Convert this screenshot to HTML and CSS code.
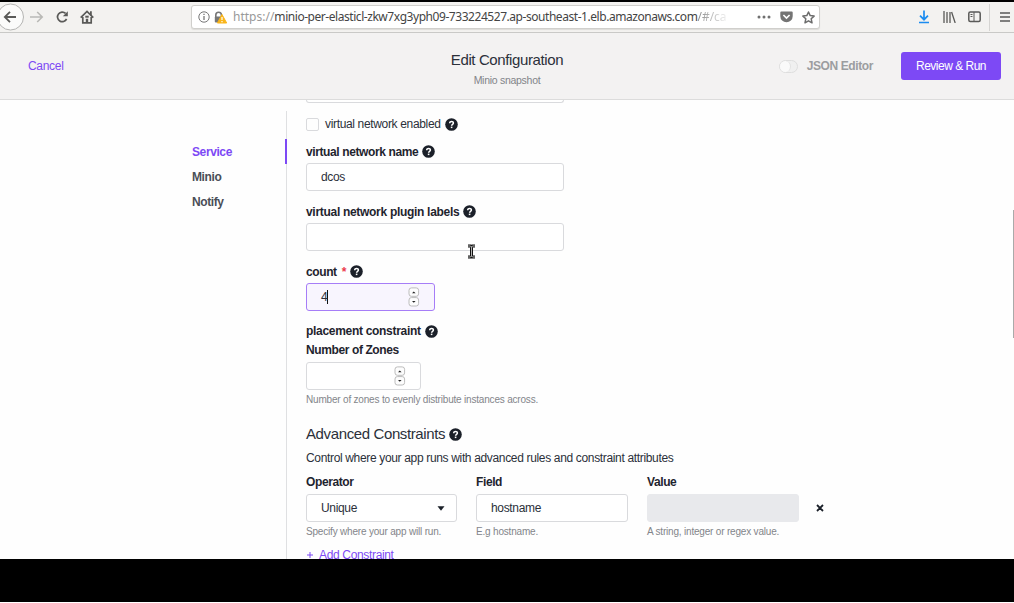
FILE: index.html
```html
<!DOCTYPE html>
<html lang="en">
<head>
<meta charset="utf-8">
<title>Edit Configuration</title>
<link rel="stylesheet" href="styles.css">
</head>
<body>
<svg class="defs" width="0" height="0">
  <symbol id="help" viewBox="0 0 13 13"><circle cx="6.5" cy="6.5" r="6.3" fill="#1b2029"/><path d="M4.7 5.2c0-2.4 3.8-2.2 3.7-.1 0 1.2-1.8 1.2-1.8 2.6" fill="none" stroke="#fff" stroke-width="1.5"/><rect x="5.8" y="8.6" width="1.6" height="1.5" fill="#fff"/></symbol>
  <symbol id="spin" viewBox="0 0 12 20"><rect x="1" y=".9" width="9.6" height="8.4" rx="2.4" fill="#fdfdfd" stroke="#bcbcbc"/><rect x="1" y="10.6" width="9.6" height="8.4" rx="2.4" fill="#fdfdfd" stroke="#bcbcbc"/><path d="M4 6.2 5.8 4.4 7.6 6.2zM4 14 5.8 15.8 7.6 14z" fill="#222"/></symbol>
</svg>
<div class="screen">
  <nav class="toolbar">
    <div class="nav-buttons">
      <span class="back"><svg width="26" height="28" viewBox="0 0 26 28"><circle cx="10.5" cy="14" r="13" fill="#fbfbfa" stroke="#b5b5b3"/><path d="M16 14H5.2M10 8.8 4.8 14l5.2 5.2" fill="none" stroke="#5a5a58" stroke-width="1.8"/></svg></span>
      <svg width="14" height="14" viewBox="0 0 14 14"><path d="M0 7h12M7.2 2l5 5-5 5" fill="none" stroke="#b9b9b6" stroke-width="1.6"/></svg>
      <svg class="reload" width="14" height="14" viewBox="0 0 14 14"><path d="M10.600 3.400A4.800 4.800 0 1 0 11.600 9" fill="none" stroke="#5a5a58" stroke-width="1.700"/><path d="M12.800 1.300v5H7.800z" fill="#5a5a58"/></svg>
      <svg class="home" width="14" height="14" viewBox="0 0 14 14"><path d="M.7 7.6 7 1.5l6.3 6.1M2.8 7v5.8h8.4V7" fill="none" stroke="#5a5a58" stroke-width="1.7"/><path d="M5.8 13V8.8h2.4V13M10 1.3h1.8v4H10z" fill="#5a5a58"/><rect x="5.3" y="5.7" width="3.4" height="2" fill="#5a5a58"/></svg>
    </div>
    <div class="urlbar">
      <svg width="12" height="12" viewBox="0 0 12 12"><circle cx="6" cy="6" r="5.2" fill="none" stroke="#777"/><path d="M6 5v4M6 2.7v1.4" stroke="#777" stroke-width="1.3"/></svg>
      <svg class="lock" width="13" height="13" viewBox="0 0 13 13"><path d="M1.8 6V4a2.8 2.8 0 0 1 5.6 0v2" fill="none" stroke="#777" stroke-width="1.6"/><rect x=".8" y="5.5" width="7.6" height="6" rx="1" fill="#777"/><path d="M8 3.5 12.7 12H3.4z" fill="#f9b51b" stroke="#f9b51b" stroke-linejoin="round"/><path d="M8 6v3M8 10v1.3" stroke="#fff" stroke-width="1.2"/></svg>
      <span class="url"><span class="scheme">https://</span><span class="host">minio-per-elasticl-zkw7xg3yph09-733224527.ap-southeast-1.elb.amazonaws.com</span><span class="path">/#/ca</span></span>
      <svg class="dots" width="14" height="12" viewBox="0 0 14 12"><g fill="#707070"><circle cx="2" cy="6" r="1.5"/><circle cx="7" cy="6" r="1.5"/><circle cx="12" cy="6" r="1.5"/></g></svg>
      <svg width="13" height="12" viewBox="0 0 13 12"><path d="M1.3.5h10.4q1 0 1 1v3.7a6.2 6 0 0 1-12.4 0V1.500q0-1 1-1z" fill="#747474"/><path d="m3.4 4 3.1 3 3.1-3" fill="none" stroke="#fff" stroke-width="1.7"/></svg>
      <svg width="13" height="13" viewBox="0 0 13 13"><path d="m6.500 1 1.700 3.600 3.900.5-2.900 2.700.8 4-3.500-2-3.500 2 .8-4L.9 5.100l3.900-.5z" fill="none" stroke="#6c6c6c" stroke-width="1.5" stroke-linejoin="round"/></svg>
    </div>
    <div class="tools">
      <svg width="12" height="14" viewBox="0 0 12 14"><path d="M6 .5v9M2 5.700l4 4 4-4M1 12.500h10" fill="none" stroke="#1b8cf0" stroke-width="1.700"/></svg>
      <svg width="13" height="12" viewBox="0 0 13 12"><path d="M1 0v12M4 1v11M7 1v11M8.600 1l3.600 11" fill="none" stroke="#5a5a58" stroke-width="1.300"/></svg>
      <svg class="panel" width="13" height="12" viewBox="0 0 13 12"><rect x=".8" y="1" width="11.400" height="9.600" rx="1.500" fill="none" stroke="#5a5a58" stroke-width="1.500"/><path d="M6 1v10M2.500 3.500h2M2.500 5.500h2" stroke="#5a5a58" fill="none"/></svg>
      <span class="divider"></span>
      <svg width="10" height="12" viewBox="0 0 10 12"><path d="M0 2h10M0 6h10M0 10h10" stroke="#5a5a58" stroke-width="1.500"/></svg>
    </div>
  </nav>
  <header class="header">
    <a class="cancel">Cancel</a>
    <div class="heading"><h1>Edit Configuration</h1><p>Minio snapshot</p></div>
    <div class="actions"><span class="toggle"><i></i></span><span class="json">JSON Editor</span><button class="run">Review &amp; Run</button></div>
  </header>
  <main class="content">
    <aside class="sidebar">
      <ul><li class="active">Service</li><li>Minio</li><li>Notify</li></ul>
    </aside>
    <section class="form">
      <div class="input clipped"></div>
      <div class="check"><span class="box"></span><span>virtual network enabled</span><svg class="help"><use href="#help"/></svg></div>
      <div class="label"><span>virtual network name</span><svg class="help"><use href="#help"/></svg></div>
      <div class="input">dcos</div>
      <div class="label next"><span class="wide">virtual network plugin labels</span><svg class="help"><use href="#help"/></svg></div>
      <div class="input"></div>
      <div class="label next"><span>count</span><b class="req">*</b><svg class="help"><use href="#help"/></svg></div>
      <div class="input number focused"><span class="typed">4</span><svg class="spin"><use href="#spin"/></svg></div>
      <div class="label placement"><span class="wide">placement constraint</span><svg class="help"><use href="#help"/></svg></div>
      <div class="label zones"><span>Number of Zones</span></div>
      <div class="input number zone-input"><svg class="spin"><use href="#spin"/></svg></div>
      <p class="hint">Number of zones to evenly distribute instances across.</p>
      <h2><span>Advanced Constraints</span><svg class="help"><use href="#help"/></svg></h2>
      <p class="desc">Control where your app runs with advanced rules and constraint attributes</p>
      <div class="row">
        <div><div class="label">Operator</div><div class="input select">Unique<svg width="8" height="5" viewBox="0 0 8 5"><path d="M.5.300h7L4 4.700z" fill="#1b2029"/></svg></div><p class="hint">Specify where your app will run.</p></div>
        <div><div class="label">Field</div><div class="input">hostname</div><p class="hint">E.g hostname.</p></div>
        <div><div class="label">Value</div><div class="input disabled"></div><p class="hint">A string, integer or regex value.</p></div>
        <svg class="remove" width="8" height="8" viewBox="0 0 8 8"><path d="m1 1 6 6M7 1 1 7" stroke="#1b2029" stroke-width="1.800"/></svg>
      </div>
      <a class="add"><svg width="8" height="8" viewBox="0 0 8 8"><path d="M4 1v6M1 4h6" stroke="#7d49f5"/></svg>Add Constraint</a>
    </section>
    <span class="scrollbar"></span>
    <svg class="pointer" width="9" height="15" viewBox="0 0 9 15"><path d="M1 2h2.500l1 1 1-1H8M4.500 3v9M1 13h2.500l1-1 1 1H8" fill="none" stroke="#111" stroke-width="3"/><path d="M1 2h2.500l1 1 1-1H8M4.500 3v9M1 13h2.500l1-1 1 1H8" fill="none" stroke="#ddd" stroke-width=".8"/></svg>
  </main>
</div>
</body>
</html>
```
FILE: styles.css
```css
* { box-sizing: border-box; }
body { margin: 0; background: #fefefe; overflow: hidden; font: 12px "Liberation Sans", Arial, sans-serif; color: #2b303a; letter-spacing: -.34px; }
h1, h2, p, ul { margin: 0; padding: 0; font-weight: normal; }
svg { flex: none; display: block; }
.defs { position: absolute; }
.screen { height: 602px; background: #000; padding-top: 2px; }
.toolbar { height: 31px; background: #f3f2f0; border-bottom: 1px solid #c9c9c7; display: flex; align-items: center; }
.nav-buttons { width: 191px; display: flex; align-items: center; }
.back { width: 30px; }
.reload { margin-left: 11px; }
.home { margin-left: 11px; }
.urlbar { width: 629px; height: 24px; border: 1px solid #d0cfcc; border-radius: 3px; background: #fff; display: flex; align-items: center; padding-left: 6px; box-shadow: 0 1px 1px #dddcd9; }
.lock { margin-left: 4px; }
.url { width: 496px; margin-left: 6px; white-space: nowrap; font: 12px/20px "Noto Sans", sans-serif; letter-spacing: -.45px; color: #444; display: flex; }
.scheme { color: #999; letter-spacing: 0; }
.path { letter-spacing: 0; color: transparent; background: linear-gradient(90deg, #888, #f2f2f2); -webkit-background-clip: text; background-clip: text; }
.dots { margin: 0 9px 0 28px; }
.dots + svg { margin-right: 9px; }
.tools { display: flex; align-items: center; margin-left: 98px; }
.tools svg + svg { margin-left: 13px; }
.tools .panel { margin-left: 12px; }
.divider { width: 1px; height: 27px; background: #d5d4d2; margin: 0 10px 0 8px; }
.header { height: 67px; background: #f3f2f2; border-bottom: 1px solid #dcdcdc; display: grid; grid-template-columns: 1fr 200px 1fr; align-items: center; padding: 0 13px 0 28px; }
.cancel { color: #7d49f5; letter-spacing: -.3px; }
.heading { text-align: center; padding: 7px 15px 0 0; }
h1 { font-size: 15px; line-height: 20px; letter-spacing: -.38px; }
.heading p { font-size: 10.5px; line-height: 20px; color: #828489; letter-spacing: -.28px; }
.actions { display: flex; align-items: center; justify-content: flex-end; }
.toggle { width: 19px; height: 13px; border: 1px solid #dedede; border-radius: 7px; background: #f0f0f0; }
.toggle i { display: block; width: 11px; height: 11px; border-radius: 6px; background: #fafafa; border-right: 1px solid #e2e2e2; }
.json { margin: 0 28px 0 9px; font-weight: bold; color: #9b9da0; letter-spacing: -.4px; }
.run { width: 100px; height: 28px; border: 0; border-radius: 3px; background: #7d49f5; color: #fff; font: inherit; letter-spacing: -.5px; padding: 0; }
.content { position: relative; height: 459px; background: #fefefe; overflow: hidden; display: flex; align-items: flex-start; }
.sidebar { width: 287px; height: 448px; margin-top: 11px; border-right: 1px solid #dfe0e2; padding-top: 28px; }
.sidebar ul { list-style: none; margin-right: -1px; }
.sidebar li { height: 25px; line-height: 27px; padding-left: 192px; font-weight: bold; letter-spacing: -.4px; color: #4a4e57; }
.sidebar .active { border-right: 2px solid #7d49f5; color: #7d49f5; }
.form { width: 530px; margin-left: 19px; }
.input { width: 258px; height: 28px; border: 1px solid #d9dadd; border-radius: 3px; padding: 0 14px; display: flex; align-items: center; background: #fff; }
.clipped { height: 3px; border-top: 0; border-radius: 0 0 3px 3px; }
.help { width: 13px; height: 13px; margin-left: 4px; }
.check { height: 24px; margin-top: 9px; display: flex; align-items: center; }
.box { width: 13px; height: 13px; border: 1px solid #d9dadd; border-radius: 2px; margin-right: 6px; }
.label { height: 22px; padding-bottom: 1px; display: flex; align-items: center; font-weight: bold; letter-spacing: -.39px; color: #1f242e; }
.wide { letter-spacing: -.3px; }
.check + .label { margin-top: 5px; }
.next { margin-top: 10px; }
.req { color: #eb3a4c; margin-left: 5px; }
.number { width: 129px; padding-right: 14px; }
.spin { width: 12px; height: 20px; margin-left: auto; }
.focused { background: #f8f5fe; border-color: #a67df7; }
.typed { border-right: 1px solid #111; line-height: 14px; }
.placement { height: 20px; margin-top: 10px; padding: 0; }
.zones { height: 18px; }
.zone-input { width: 115px; margin-top: 3px; }
.hint { font-size: 10px; line-height: 20px; letter-spacing: -.19px; color: #83858a; white-space: nowrap; }
h2 { height: 22px; margin-top: 13px; display: flex; align-items: center; font-size: 15px; line-height: 17px; letter-spacing: -.38px; }
h2 span { padding-bottom: 1px; }
.desc { line-height: 20px; margin-top: 3px; }
.row { display: grid; grid-template-columns: 151px 152px 152px 8px; column-gap: 19px; margin-top: 3px; }
.row .input { width: 100%; }
.row .label { height: 23px; }
.select { justify-content: space-between; padding-right: 11px; }
.disabled { background: #e8e9ec; border-color: #e8e9ec; }
.remove { margin: 33px 0 0 -2px; }
.add { display: flex; align-items: center; gap: 5px; height: 20px; margin-top: 3px; color: #7d49f5; }
.scrollbar { position: absolute; right: 0; top: 110px; width: 1px; height: 128px; background: #aaa; }
.pointer { position: absolute; left: 467px; top: 144px; }
```
